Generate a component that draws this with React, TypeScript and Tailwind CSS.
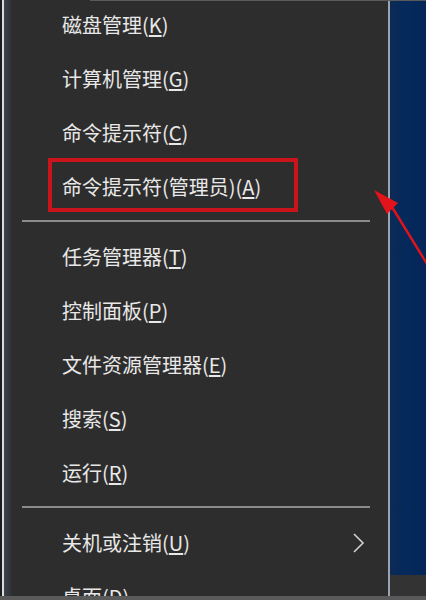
import { Fragment } from 'react';

type Item = { label: string; key: string; arrow?: boolean };

const groups: Item[][] = [
  [
    { label: '磁盘管理', key: 'K' },
    { label: '计算机管理', key: 'G' },
    { label: '命令提示符', key: 'C' },
    { label: '命令提示符(管理员)', key: 'A' },
  ],
  [
    { label: '任务管理器', key: 'T' },
    { label: '控制面板', key: 'P' },
    { label: '文件资源管理器', key: 'E' },
    { label: '搜索', key: 'S' },
    { label: '运行', key: 'R' },
  ],
  [
    { label: '关机或注销', key: 'U', arrow: true },
    { label: '桌面', key: 'D' },
  ],
];

const MenuRow = ({ item }: { item: Item }) => (
  <div className="flex h-[54px] shrink-0 items-center justify-between pl-[50px] pr-[22px]">
    <span className="whitespace-nowrap text-[20px] leading-none text-[#e8e8e8]">
      {item.label}(<span className="underline underline-offset-2">{item.key}</span>)
    </span>
    {item.arrow && (
      <svg width="14" height="22" viewBox="0 0 14 22" className="text-[#d0d0d0]">
        <path d="M2 2 L11 11 L2 20" fill="none" stroke="currentColor" strokeWidth="1.6" />
      </svg>
    )}
  </div>
);

export default function App() {
  return (
    <div
      className="relative flex h-[600px] w-[426px] overflow-hidden bg-[#1c1f24]"
      style={{ fontFamily: '"Noto Sans CJK SC", "Noto Sans", sans-serif' }}
    >
      {/* left frame */}
      <div className="w-[2px] shrink-0 bg-[#1a1c20]" />
      <div className="w-[2px] shrink-0 bg-[#dcdcdc]" />
      <div className="w-[8px] shrink-0 bg-gradient-to-r from-[#3d4350] to-[#2f2f30]" />

      {/* menu */}
      <div className="relative flex w-[376px] shrink-0 flex-col bg-[#2e2d2d]">
        <div className="-mt-[2px] flex flex-col">
          {groups.map((g, gi) => (
            <Fragment key={gi}>
              {gi > 0 && (
                <div className="flex h-[16px] shrink-0 pt-[6px] pl-[10px] pr-[18px]">
                  <div className="h-[2px] w-full bg-[#8c8c8c]" />
                </div>
              )}
              {g.map((item) => (
                <MenuRow key={item.key} item={item} />
              ))}
            </Fragment>
          ))}
        </div>

        {/* red annotation box */}
        <div className="absolute left-[36px] top-[158px] h-[54px] w-[250px] border-[4px] border-[#c9141c]" />
      </div>

      {/* divider between menu and desktop */}
      <div className="w-[2px] shrink-0 bg-[#9aa3b0]" />

      {/* desktop */}
      <div className="flex flex-1 flex-col">
        <div className="h-[575px] bg-gradient-to-r from-[#0d2a55] via-[#04295c] to-[#062556]" />
        <div className="flex-1 bg-[#333333]" />
      </div>

      {/* bottom edge */}
      <div className="absolute bottom-0 left-0 h-[4px] w-full bg-[#5a5a5a]" />
      <div className="absolute left-[90px] top-0 h-[1px] w-[336px] bg-[#5a5a5a]" />

      {/* red arrow */}
      <svg className="pointer-events-none absolute left-0 top-0" width="426" height="600">
        <line x1="392" y1="207" x2="432" y2="272" stroke="#e3131b" strokeWidth="2.4" />
        <polygon points="374,190 398,203 387,214" fill="#e3131b" />
      </svg>
    </div>
  );
}
